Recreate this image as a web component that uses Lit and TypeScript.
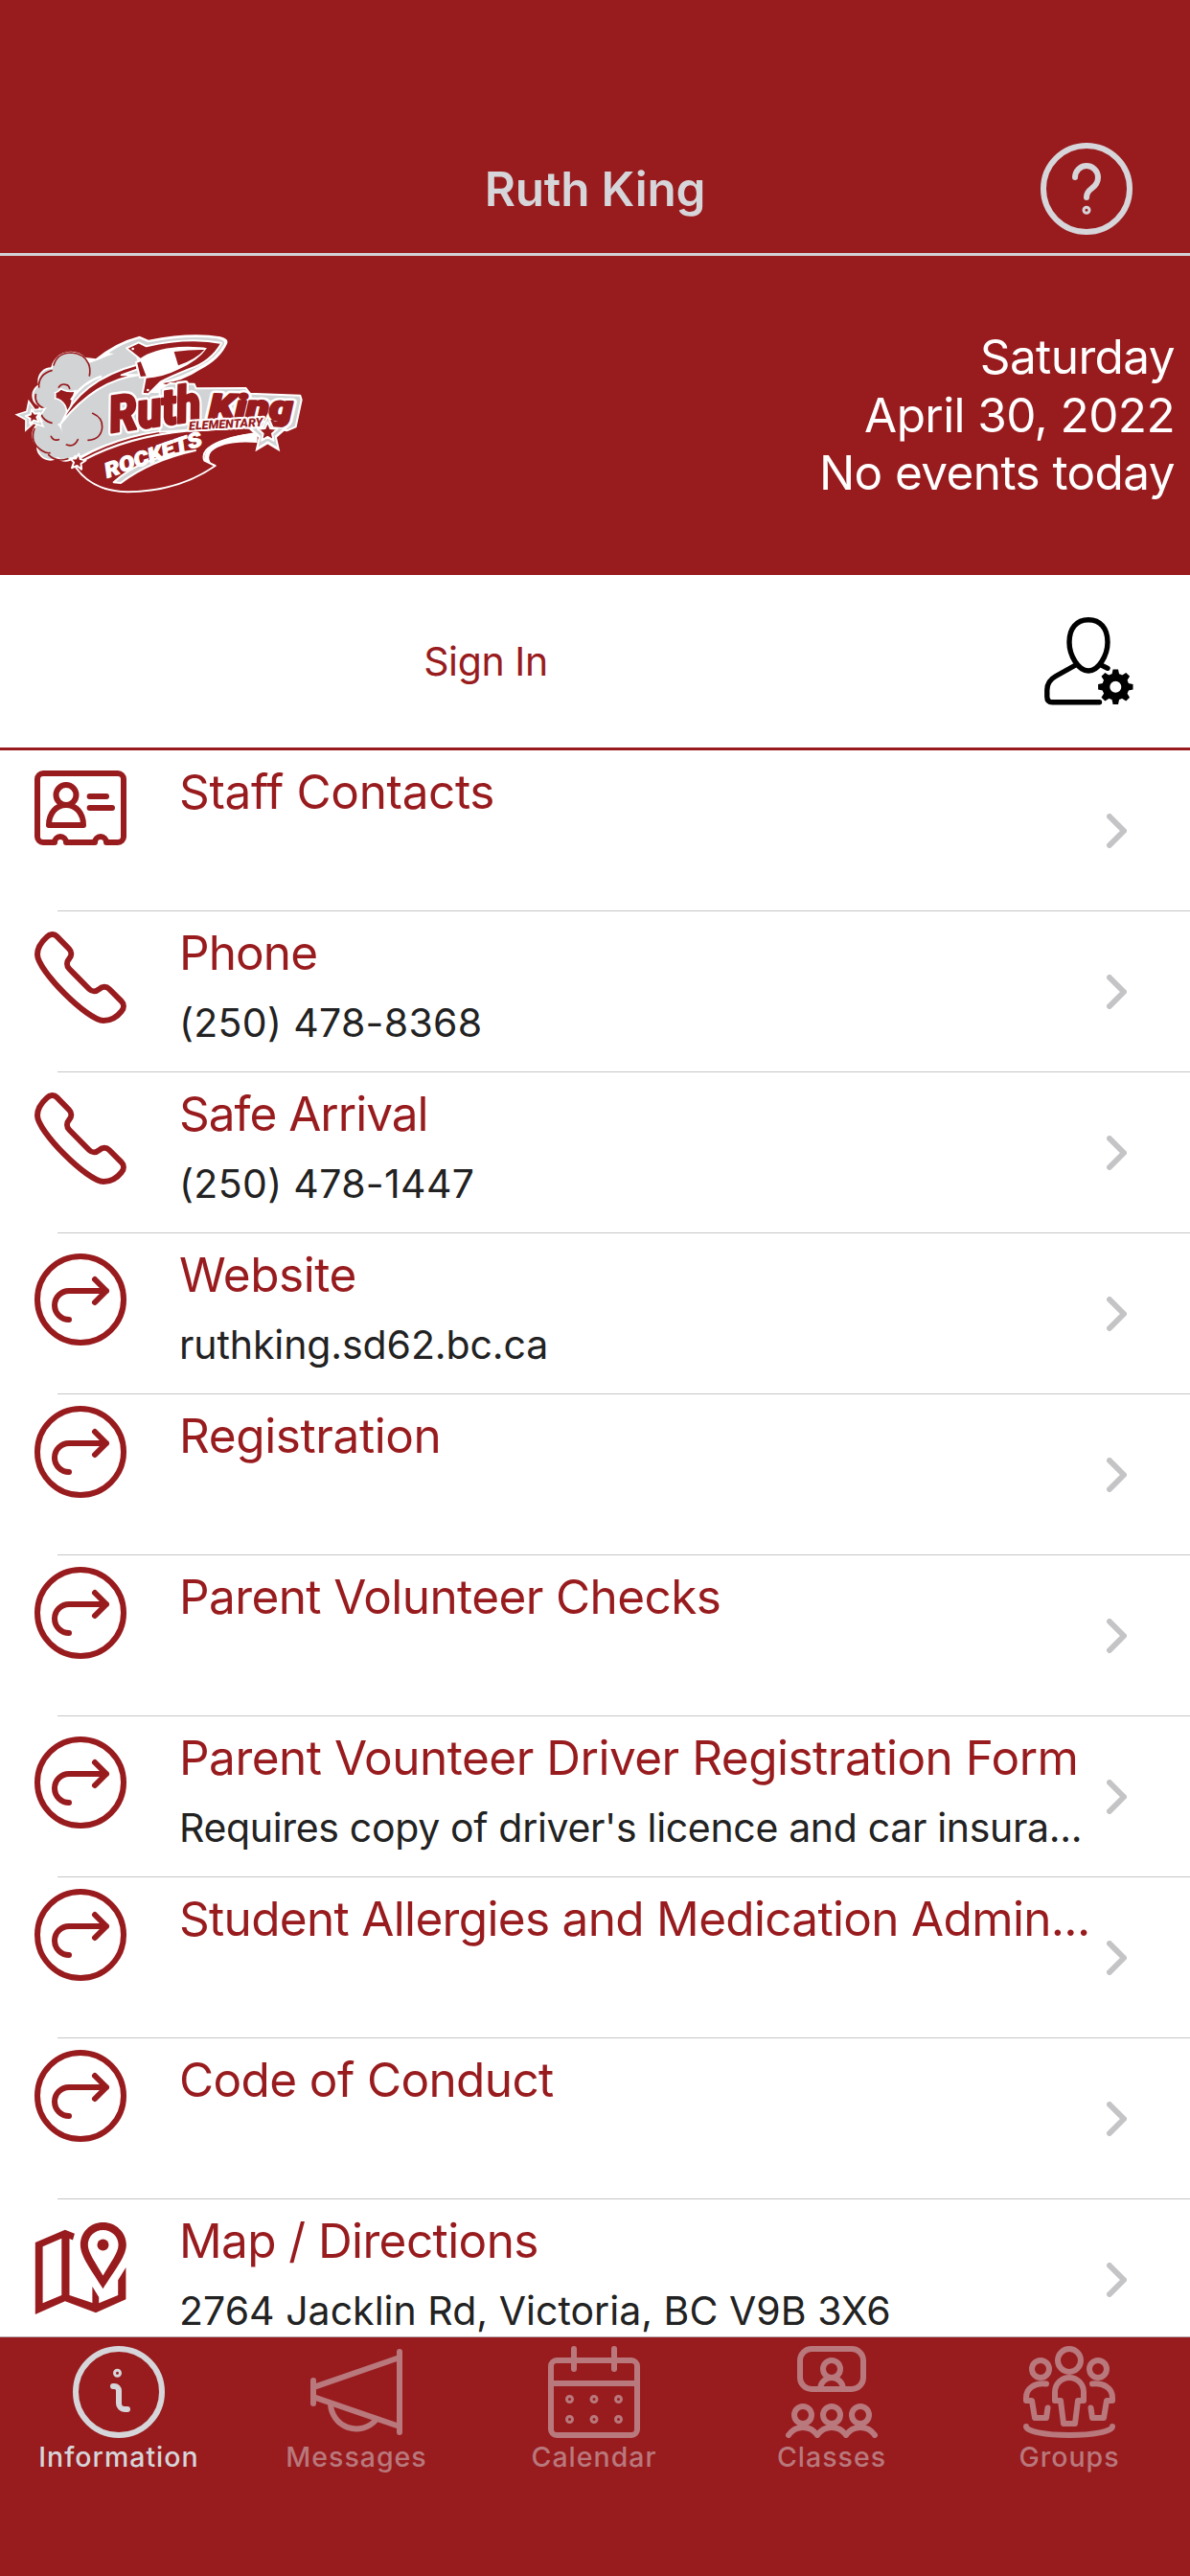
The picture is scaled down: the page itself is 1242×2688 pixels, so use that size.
import { LitElement, html, css, svg, nothing } from 'lit';
import { customElement, property, state } from 'lit/decorators.js';
import { classMap } from 'lit/directives/class-map.js';
import { styleMap } from 'lit/directives/style-map.js';

interface InfoItem {
  icon: string;
  title: string;
  // letter spacing in px
  tracking: number;
  detail?: string;
  detailTracking?: number;
}

const items: InfoItem[] = [
  { icon: 'contact', title: 'Staff Contacts', tracking: -0.35 },
  {
    icon: 'phone',
    title: 'Phone',
    tracking: -0.9,
    detail: '(250) 478-8368',
    detailTracking: 0.32,
  },
  {
    icon: 'phone',
    title: 'Safe Arrival',
    tracking: -1,
    detail: '(250) 478-1447',
    detailTracking: 0.35,
  },
  {
    icon: 'link',
    title: 'Website',
    tracking: -0.45,
    detail: 'ruthking.sd62.bc.ca',
    detailTracking: -0.1,
  },
  { icon: 'link', title: 'Registration', tracking: -0.4 },
  { icon: 'link', title: 'Parent Volunteer Checks', tracking: -0.6 },
  {
    icon: 'link',
    title: 'Parent Vounteer Driver Registration Form',
    tracking: -0.5,
    detail: "Requires copy of driver's licence and car insura...",
    detailTracking: -0.33,
  },
  {
    icon: 'link',
    title: 'Student Allergies and Medication Admin...',
    tracking: -0.68,
  },
  { icon: 'link', title: 'Code of Conduct', tracking: -0.62 },
  {
    icon: 'map',
    title: 'Map / Directions',
    tracking: -0.6,
    detail: '2764 Jacklin Rd, Victoria, BC V9B 3X6',
    detailTracking: 0.03,
  },
];

const tabs = [
  { icon: 'info', name: 'Information' },
  { icon: 'messages', name: 'Messages' },
  { icon: 'calendar', name: 'Calendar' },
  { icon: 'classes', name: 'Classes' },
  { icon: 'groups', name: 'Groups' },
];

// line icons on a 32 unit grid
const icons: Record<string, unknown> = {
  help: svg`
    <circle cx="16" cy="16" r="15" />
    <path d="M12 12a4 4 0 0 1 8 0c0 2-1 3-2.2 3.9C16.6 16.8 16 17.5 16 19" />
    <circle class="dot" cx="16" cy="23.4" r="1" />
  `,
  contact: svg`
    <path
      d="M7 28H3a2 2 0 0 1-2-2V6a2 2 0 0 1 2-2h26a2 2 0 0 1 2 2v20a2 2 0 0 1-2 2h-4a2 2 0 0 0-4 0H11a2 2 0 0 0-4 0z"
    />
    <circle cx="11" cy="11.5" r="3.5" />
    <path d="M5 22h12c0-4.2-2.6-7-6-7s-6 2.8-6 7z" />
    <path d="M19.2 12h5.8M19.2 16h7.8" />
  `,
  phone: svg`
    <path
      d="M4.4 1.8C5.3.8 6.8.7 7.8 1.7L12 6c1 1 1 2.4.1 3.4-1 1.1-1 2.6 0 3.6L19 20c1 1 2.4 1 3.4.1 1.1-1.1 2.6-1.1 3.6-.1l4.2 4.2c1 1 1 2.5.1 3.5C28.5 30 26.3 31 24 31 18.5 31 1 13.5 1 8c0-2.3 1.2-4.2 3.4-6.2z"
    />
  `,
  link: svg`
    <circle cx="16" cy="16" r="15" />
    <path d="M12 23a5 5 0 0 1 0-10h13M21 9l4 4-4 4" />
  `,
  info: svg`
    <circle cx="16" cy="16" r="15" />
    <circle class="dot" cx="15.5" cy="9.4" r="1" />
    <path d="M14 14h.5a1.5 1.5 0 0 1 1.5 1.5V20a2 2 0 0 0 2 2h1" />
  `,
  messages: svg`
    <path d="M31 2v28M1 12v8M1.5 14.2L31 4M1.5 17.9L31 28" />
    <path d="M7 20a9 9 0 0 0 15.8 5.7" />
  `,
  calendar: svg`
    <rect x="1" y="5" width="30" height="26" rx="2" />
    <path d="M1 13h30M9 1v7M23 1v7" />
    ${[18.5, 25.5].map((y) =>
      [7.5, 16, 24.5].map(
        (x) => svg`<circle class="dot" cx=${x} cy=${y} r="1" />`
      )
    )}
  `,
  classes: svg`
    <rect x="5" y="1" width="22" height="14" rx="4" />
    <circle cx="16" cy="8" r="3" />
    <path d="M12 15a4 4 0 0 1 8 0" />
    <circle cx="6" cy="24" r="3" />
    <circle cx="16" cy="24" r="3" />
    <circle cx="26" cy="24" r="3" />
    <path d="M1 31a6 6 0 0 1 10 0a6 6 0 0 1 10 0a6 6 0 0 1 10 0" />
  `,
  groups: svg`
    <circle cx="16" cy="5" r="4" />
    <circle cx="6" cy="8" r="3" />
    <circle cx="26" cy="8" r="3" />
    <path d="M11 19v-3a5 5 0 0 1 10 0v3h-2l-1 8h-4l-1-8z" />
    <path d="M8 13.2C4 12.7 1 14.6 1 18v1h2l1 6h4l.5-3.5" />
    <path d="M24 13.2c4-.5 7 1.4 7 4.8v1h-2l-1 6h-4l-.5-3.5" />
    <path d="M1 28c0 1.7 6.5 3 15 3s15-1.3 15-3" />
  `,
};

const mapIcon = svg`
  <path
    class="solid"
    fill-rule="evenodd"
    d="M.8 21L31.9 7.7 41.9 11.7 40 18.5 36.500 17V76l23.900 8V67l6.800 11v6.300l20-8.300V60.300L95.400 47v33.300L64 94.300 31.900 82.300.8 96zM8.600 25.300v59L28.300 76V16.700z"
  />
  <path
    class="solid"
    fill-rule="evenodd"
    d="M71.5 0C85 0 95.8 10.5 95.8 23.5 95.8 36 82 52 71.5 69.3 61 52 47.9 36 47.9 23.5 47.9 10.5 58 0 71.5 0zM71.5 8C62.5 8 55.8 15 55.8 23.5 55.8 32 64.5 43 71.5 55.5 78.5 43 87.6 32 87.6 23.5 87.6 15 80.5 8 71.5 8z"
  />
  <circle class="solid" cx="71.5" cy="23.5" r="6" />
`;

@customElement('line-icon')
export class LineIcon extends LitElement {
  static styles = css`
    :host {
      display: block;
      flex: none;
      width: 96px;
      height: 96px;
    }
    svg {
      display: block;
      width: 96px;
      height: 96px;
      fill: none;
      stroke: currentColor;
      stroke-width: 2;
      stroke-linecap: round;
      stroke-linejoin: round;
    }
    .dot {
      stroke-width: 1;
    }
    .solid {
      fill: currentColor;
      stroke: none;
    }
  `;

  @property() name = '';

  render() {
    if (this.name === 'map') {
      return html`<svg viewBox="0 0 96 96">${mapIcon}</svg>`;
    }
    return html`<svg viewBox="0 0 32 32">${icons[this.name]}</svg>`;
  }
}

@customElement('user-settings-icon')
export class UserSettingsIcon extends LitElement {
  static styles = css`
    :host {
      display: block;
      width: 100px;
      height: 100px;
    }
    svg {
      display: block;
      fill: none;
      stroke: #000;
      stroke-width: 5.4;
      stroke-linecap: round;
    }
    .tooth {
      fill: #000;
      stroke: none;
    }
    .wheel {
      stroke-width: 8;
    }
  `;

  render() {
    return html`
      <svg width="100" height="100" viewBox="0 0 100 100">
        <path
          d="M50 6.7C62.5 6.7 70 16 70 30 70 44 60.5 60 50 60 39.5 60 30 44 30 30 30 16 37.5 6.7 50 6.7z"
        />
        <path
          d="M35.7 54.5L16 65.5C9.5 69 6.8 74 6.8 80v7q0 5.8 5.5 5.8H61.5M64 54.3L70 57.3"
        />
        <circle class="wheel" cx="78.3" cy="76.7" r="10" />
        ${[0, 45, 90, 135, 180, 225, 270, 315].map(
          (a) => svg`
            <path
              class="tooth"
              d="M74.3 64.5L75.6 58.5h5.4L82.3 64.5z"
              transform="rotate(${a} 78.3 76.7)"
            />`
        )}
      </svg>
    `;
  }
}

const star = (cx: number, cy: number, r: number, turn = 0) =>
  Array.from({ length: 10 }, (_, i) => {
    const a = ((i * 36 - 90 + turn) * Math.PI) / 180;
    const d = i % 2 ? r * 0.46 : r;
    return `${(cx + d * Math.cos(a)).toFixed(1)},${(cy + d * Math.sin(a)).toFixed(1)}`;
  }).join(' ');

@customElement('school-logo')
export class SchoolLogo extends LitElement {
  static styles = css`
    :host {
      display: block;
      width: 330px;
      height: 200px;
    }
    svg {
      display: block;
    }
    .white {
      fill: #fff;
    }
    .gray {
      fill: #d1d3d4;
    }
    .red {
      fill: #981b1e;
    }
    .rim {
      fill: none;
      stroke: #fff;
      stroke-width: 7;
    }
    .line {
      fill: none;
      stroke: #981b1e;
      stroke-width: 5;
      stroke-linecap: round;
    }
    .outlined {
      stroke: #fff;
      stroke-width: 6;
      stroke-linejoin: round;
    }
    text {
      font-family: Roboto, 'Liberation Sans', sans-serif;
      font-weight: 900;
      font-style: italic;
      stroke-linejoin: round;
    }
    .halo {
      fill: #fff;
      stroke: #fff;
      stroke-width: 22;
    }
    .heavy {
      fill: #981b1e;
      stroke: #981b1e;
      stroke-width: 7;
    }
    .small {
      fill: #981b1e;
      stroke: #fff;
      stroke-width: 12;
      paint-order: stroke;
    }
    .banner-word {
      fill: #fff;
      stroke: #fff;
      stroke-width: 3;
    }
  `;

  private clouds = [
    [222, 174, 60],
    [160, 202, 38],
    [138, 248, 34],
    [165, 300, 42],
    [255, 345, 64],
    [150, 372, 46],
    [158, 408, 40],
    [205, 415, 36],
  ];

  private word(
    text: string,
    x: number,
    y: number,
    size: number,
    len: number,
    turn: number,
    cls: string
  ) {
    return svg`
      <text
        class=${cls}
        x=${x}
        y=${y}
        font-size=${size}
        textLength=${len}
        lengthAdjust="spacingAndGlyphs"
        transform="rotate(${turn} ${x} ${y})"
      >${text}</text>`;
  }

  render() {
    return html`
      <svg width="330" height="200" viewBox="0 0 990 600">
        <!-- smoke -->
        ${this.clouds.map(
          ([x, y, r]) => svg`<circle class="white" cx=${x} cy=${y} r=${r + 4} />`
        )}
        <path
          class="white"
          d="M262 128L300 133Q360 82 437 62L465 74Q600 48 690 64 716 70 712 84 690 135 625 168 570 205 510 210L600 240 590 350Q400 360 250 450L180 420z"
        />
        ${this.clouds.map(
          ([x, y, r]) => svg`<circle class="gray" cx=${x} cy=${y} r=${r - 1} />`
        )}
        <path
          class="gray"
          d="M270 150L310 136Q360 112 415 105L450 180 455 240 600 240 590 350Q390 360 245 440L180 400z"
        />
        <path
          class="gray"
          d="M340 115Q385 84 437 70L464 82Q590 58 680 70 706 76 702 86 680 130 620 160 570 190 500 208L430 130z"
        />
        <path
          class="line"
          d="M168 153Q180 114 224 114 262 116 277 148 284 165 280 186M122 222Q120 182 162 170M112 245Q106 275 140 290M128 305Q138 330 162 334M290 304Q322 318 320 348 316 386 276 388M108 352Q92 395 130 420 145 430 156 428M184 222Q192 210 206 214 216 216 218 226M160 376Q168 392 184 386M208 402Q232 412 244 386M152 434Q176 458 212 446"
        />
        <path class="rim" d="M222 262Q262 205 318 188" />
        <path
          class="red outlined"
          d="M192 334Q250 200 428 152L430 166 380 184 434 184Q300 200 192 334z"
        />

        <!-- rocket -->
        <path
          class="red outlined"
          d="M396 100L434 82 458 94Q590 64 694 84 660 144 590 166 530 190 502 206L464 244 446 242 455 194 440 135z"
        />
        <path
          class="white"
          d="M436 134Q480 102 560 96 620 94 648 100 620 140 560 166 510 192 456 194z"
        />
        <path class="red" d="M545 111Q600 104 640 105 612 136 558 154z" />
        <path class="red outlined" d="M426 144L442 138 462 190 438 192z" />
        <circle class="white" cx="416" cy="102" r="4" />
        <circle class="white" cx="463" cy="231" r="4" />

        <!-- ribbon -->
        <path
          class="red outlined"
          d="M238 474Q290 548 400 550 560 548 674 468L640 452Q626 418 690 392 740 374 806 366L800 345 590 352Q400 360 254 442z"
        />
        <path
          class="white"
          d="M640 452Q634 404 720 380 770 366 806 368L806 396Q700 388 662 424 648 440 660 460z"
        />
        <path class="rim" d="M262 450Q400 376 590 358" />
        <path
          class="gray outlined"
          d="M356 520Q440 440 612 420 470 452 378 522z"
        />

        <!-- name -->
        <path
          class="gray outlined"
          d="M500 228L532 210 608 212 614 226 770 225 782 242 940 248 944 262 926 346 898 358 845 346 590 356 500 362z"
        />
        ${this.word('Ruth', 349, 364, 158, 288, -8, 'halo')}
        ${this.word('King', 654, 320, 108, 262, 1, 'halo')}
        ${this.word('Ruth', 349, 364, 158, 288, -8, 'heavy')}
        ${this.word('King', 654, 320, 108, 262, 1, 'heavy')}
        ${this.word('ELEMENTARY', 592, 356, 37, 232, -3, 'small')}
        ${this.word('ROCKETS', 336, 506, 64, 318, -19, 'banner-word')}

        <!-- stars -->
        <polygon class="white" points=${star(100, 313, 54, -12)} />
        <polygon class="gray" points=${star(100, 313, 42, -12)} />
        <polygon class="red outlined" points=${star(104, 315, 24, -12)} />
        <polygon class="red outlined" points=${star(243, 456, 26, 8)} />
        <polygon class="white" points=${star(838, 370, 66, 0)} />
        <polygon class="gray" points=${star(838, 368, 50, 0)} />
        <polygon class="red outlined" points=${star(838, 363, 32, 0)} />
      </svg>
    `;
  }
}

@customElement('info-row')
export class InfoRow extends LitElement {
  static styles = css`
    :host {
      display: block;
      flex: none;
      height: 168px;
    }
    .row {
      display: flex;
      align-items: flex-start;
      height: 167px;
      padding: 0 66px 0 36px;
      box-sizing: border-box;
    }
    line-icon {
      color: #981b1e;
      margin-top: 12px;
    }
    .detailed {
      margin-top: 21px;
    }
    .pinned {
      margin-top: 24px;
    }
    .text {
      flex: 1;
      min-width: 0;
      padding: 13px 0 0 55px;
      white-space: nowrap;
    }
    .title {
      font-size: 49.5px;
      line-height: 60px;
      color: #981b1e;
    }
    .detail {
      margin-top: 18px;
      font-size: 41px;
      line-height: 50px;
      color: #222;
    }
    .chevron {
      flex: none;
      align-self: center;
      fill: none;
      stroke: #c4c4c6;
      stroke-width: 6;
      stroke-linecap: round;
      stroke-linejoin: round;
    }
    .divider {
      height: 1px;
      margin-left: 60px;
      background: #c6c6c8;
    }
  `;

  @property({ attribute: false }) item!: InfoItem;

  render() {
    const { icon, title, tracking, detail, detailTracking } = this.item;
    return html`
      <div class="row">
        <line-icon
          class=${classMap({ detailed: !!detail, pinned: icon === 'map' })}
          name=${icon}
        ></line-icon>
        <div class="text">
          <div class="title" style=${styleMap({ letterSpacing: `${tracking}px` })}>
            ${title}
          </div>
          ${detail
            ? html`<div
                class="detail"
                style=${styleMap({ letterSpacing: `${detailTracking}px` })}
              >
                ${detail}
              </div>`
            : nothing}
        </div>
        <svg class="chevron" width="21" height="36" viewBox="0 0 21 36">
          <path d="M3 3l15 15L3 33" />
        </svg>
      </div>
      <div class="divider"></div>
    `;
  }
}

@customElement('app-root')
export class AppRoot extends LitElement {
  static styles = css`
    :host {
      display: flex;
      flex-direction: column;
      height: 2688px;
      overflow: hidden;
      background: #fff;
      font-family: Inter, 'Liberation Sans', sans-serif;
    }
    header {
      display: grid;
      grid-template-columns: 1fr auto 1fr;
      align-items: center;
      height: 267px;
      padding: 130px 60px 0;
      box-sizing: border-box;
      background: #981b1e;
      border-bottom: 3px solid #d1d1d6;
      color: #d6d5d9;
    }
    h1 {
      grid-column: 2;
      margin: 0;
      font-size: 49.5px;
      font-weight: 600;
      line-height: 60px;
      letter-spacing: -0.2px;
    }
    header line-icon {
      justify-self: end;
    }
    .banner {
      display: flex;
      justify-content: space-between;
      align-items: center;
      height: 333px;
      padding-right: 16px;
      background: #981b1e;
      color: #fff;
    }
    school-logo {
      margin-bottom: 7px;
    }
    .today {
      font-size: 49.5px;
      line-height: 60.5px;
      letter-spacing: -0.6px;
      text-align: right;
      margin-bottom: 1px;
    }
    .account {
      display: grid;
      grid-template-columns: 1fr 156px;
      align-items: center;
      height: 183px;
      padding-left: 72px;
      box-sizing: border-box;
      border-bottom: 3px solid #981b1e;
    }
    .sign-in {
      width: 870px;
      font-size: 41px;
      line-height: 50px;
      letter-spacing: -0.4px;
      text-align: center;
      color: #981b1e;
    }
    main {
      display: flex;
      flex-direction: column;
      flex: 1;
      min-height: 0;
      overflow: hidden;
    }
    nav {
      display: grid;
      grid-template-columns: repeat(5, 248px);
      height: 250px;
      padding-top: 9px;
      box-sizing: border-box;
      border-top: 1px solid #b3a9ab;
      background: #981b1e;
    }
    .tab {
      display: flex;
      flex-direction: column;
      align-items: center;
      gap: 2px;
      color: #b8787c;
      font-size: 28.5px;
      font-weight: 500;
      line-height: 36px;
      letter-spacing: 1px;
    }
    .active {
      color: #d6d5d9;
    }
  `;

  @state() private active = 'Information';

  render() {
    return html`
      <header>
        <h1>Ruth King</h1>
        <line-icon name="help"></line-icon>
      </header>
      <section class="banner">
        <school-logo></school-logo>
        <div class="today">
          <div>Saturday</div>
          <div>April 30, 2022</div>
          <div>No events today</div>
        </div>
      </section>
      <section class="account">
        <div class="sign-in">Sign In</div>
        <user-settings-icon></user-settings-icon>
      </section>
      <main>
        ${items.map((item) => html`<info-row .item=${item}></info-row>`)}
      </main>
      <nav>
        ${tabs.map(
          (tab) => html`
            <div
              class=${classMap({ tab: true, active: tab.name === this.active })}
              @click=${() => (this.active = tab.name)}
            >
              <line-icon name=${tab.icon}></line-icon>
              <span>${tab.name}</span>
            </div>
          `
        )}
      </nav>
    `;
  }
}
